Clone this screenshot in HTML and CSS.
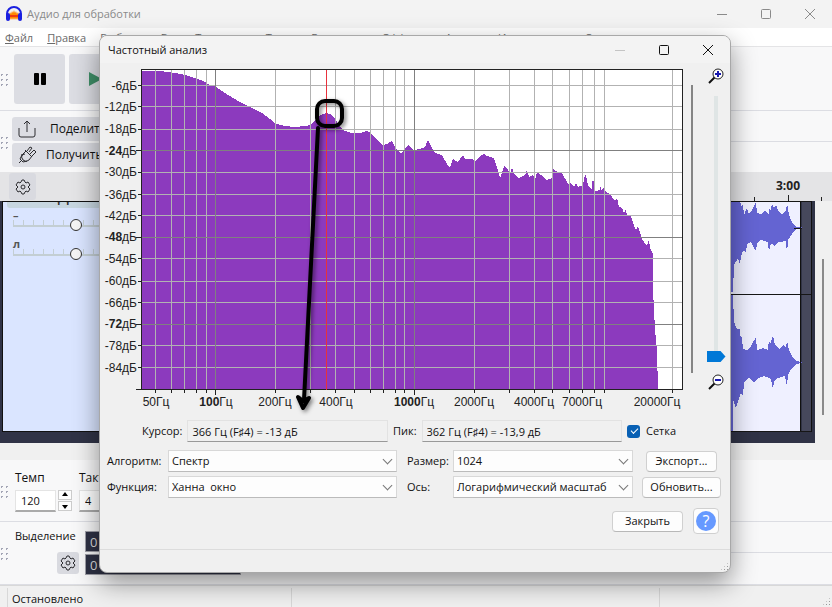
FILE: index.html
```html
<!DOCTYPE html>
<html lang="ru">
<head>
    <meta charset="UTF-8">
    <meta name="viewport" content="width=device-width, initial-scale=1.0">
    <title>Аудио для обработки</title>
    <link rel="stylesheet" href="styles.css">
</head>
<body>

<div class="app">
    <header class="titlebar">
        <svg class="logo" viewBox="0 0 18 16" width="18" height="16">
            <path d="M2 10V8a7 7 0 0 1 14 0v2" fill="none" stroke="#1a1fe0" stroke-width="2"/>
            <path d="M4 10l1-4 1 2 1-3 1 2 1-3 1 3 1-2 1 3 1-2 1 4-1 4-1-2-1 2-1-2-1 2-1-2-1 2-1-2-1 2z" fill="#ff8a00"/>
            <path d="M4 9h10v2H4z" fill="#f03a10"/>
            <rect x="1" y="7" width="4" height="8" rx="2" fill="#1a1fe0"/>
            <rect x="13" y="7" width="4" height="8" rx="2" fill="#1a1fe0"/>
        </svg>
        <span class="app-title">Аудио для обработки</span>
        <div class="window-buttons">
            <button aria-label="Свернуть"><svg viewBox="0 0 12 12"><path d="M1 6.500h10"/></svg></button>
            <button aria-label="Развернуть"><svg viewBox="0 0 12 12"><rect x="1.500" y="1.500" width="9" height="9" rx="1"/></svg></button>
            <button aria-label="Закрыть"><svg viewBox="0 0 12 12"><path d="M1 1l10 10M11 1L1 11"/></svg></button>
        </div>
    </header>

    <nav class="menu">
        <button><u>Ф</u>айл</button>
        <button><u>П</u>равка</button>
        <button>Выбрать</button>
        <button>Вид</button>
        <button>Транспорт</button>
        <button>Треки</button>
        <button>Генерация</button>
        <button>Эффекты</button>
        <button>Анализ</button>
        <button>Инструменты</button>
        <button>Справка</button>
    </nav>

    <div class="toolbar transport">
        <span class="grip"></span>
        <button class="big" aria-label="Пауза"><svg viewBox="0 0 14 14" width="14" height="14"><rect x="1" y="1" width="5" height="12" rx="1"/><rect x="8" y="1" width="5" height="12" rx="1"/></svg></button>
        <button class="big" aria-label="Воспроизвести"><svg viewBox="0 0 14 14" width="14" height="14"><path d="M1 0l13 7-13 7z" fill="#3f8f68"/></svg></button>
        <span class="meter"></span>
    </div>

    <div class="toolbar share">
        <span class="grip"></span>
        <div class="share-buttons">
            <button>
                <svg viewBox="0 0 20 20" width="20" height="20"><path d="M2 9v7q0 2 2 2h12q2 0 2-2V9M10 13V2M7 5l3-3 3 3"/></svg>
                <span>Поделиться аудио</span>
            </button>
            <button>
                <svg viewBox="0 0 20 20" width="20" height="20"><path d="M2 18l3-3M8 5l7 7M9 6L6 9q-3 3 0 6 3 3 6 0l3-4M8 9l-4 1M10 6l3-4 2 1-3 4M13 9l4-4 2 2-4 4M5 10l-2 4 3 3 4-1"/></svg>
                <span>Получить эффекты</span>
            </button>
        </div>
        <div class="dock"></div>
    </div>

    <div class="ruler">
        <button class="gear" aria-label="Настройки шкалы">
            <svg viewBox="0 0 16 16" width="16" height="16"><path d="M6 3l1-2h2l1 2 1 1 2-1 2 3-2 2 2 2-2 3-2-1-1 1-1 2H7l-1-2-1-1-2 1-2-3 2-2-2-2 2-3 2 1z"/><circle cx="8" cy="8" r="2"/></svg>
        </button>
        <svg class="ruler-scale" viewBox="731 172 101 29" width="101" height="29">
            <text x="788" y="190" text-anchor="middle">3:00</text>
            <path d="M754.500 197v4M788.500 195v6M821.500 197v4" stroke="#222"/>
        </svg>
    </div>

    <main class="tracks">
        <div class="track-panel">
            <button class="effects">Эффекты</button>
            <label for="gain">–</label>
            <input type="range" id="gain" min="0" max="100" value="50">
            <label for="pan">л</label>
            <input type="range" id="pan" min="0" max="100" value="50">
        </div>
        <svg class="wave" viewBox="731 201 84 242" width="84" height="242" shape-rendering="crispEdges">
            <rect x="731" y="201" width="70" height="230" fill="#eff0ff"/>
            <path fill="#6464d2" d="M731 201H740L742 207 743 204 744 215 747 208 749 214 752 210 756 202 757 213 761 214 765 211 769 214 769 205 770 212 772 204 774 208 776 205 779 212 782 214 786 211 787 203 789 215 792 222 796 227H802V229H796L792 234 788 240 787 255 786 241 779 242 774 246 772 243 770 245 769 253 768 242 764 241 761 240 757 243 756 251 754 248 751 242 747 244 746 252 743 251 741 256 740 264 738 258 734 265 733 292H731z"/>
            <path fill="#6464d2" d="M731 295H733L734 322 737 329 740 329 740 336 742 338 743 349 747 350 751 346 756 337 757 350 763 348 768 350 769 339 770 345 773 335 775 345 779 349 783 345 786 348 787 340 789 350 792 356 796 361 802 362V363L796 364 791 369 788 375 787 386 785 376 778 378 774 381 773 389 771 380 769 378 764 376 757 379 754 383 749 377 744 383 743 396 741 393 738 402 736 408 733 399V431H731z"/>
            <path d="M731 294.500H811M794 228.500H802M731 431.500H812" stroke="#161616" fill="none"/>
            <path d="M731 201.500H812" stroke="#161616"/>
            <rect x="802" y="202" width="9" height="92" fill="#46485c"/>
            <rect x="802" y="295" width="9" height="136" fill="#46485c"/>
            <path d="M800.500 201V431M811.500 201V432" stroke="#111"/>
        </svg>
        <div class="vscroll"><span></span></div>
    </main>

    <div class="tempo toolbar">
        <span class="grip"></span>
        <div class="field">
            <label for="tempo">Темп</label>
            <div class="spin">
                <input type="text" id="tempo" value="120">
                <div class="steps">
                    <button aria-label="Больше"><svg viewBox="0 0 8 5" width="8" height="5"><path d="M4 0l3 4H1z"/></svg></button>
                    <button aria-label="Меньше"><svg viewBox="0 0 8 5" width="8" height="5"><path d="M4 5l3-4H1z"/></svg></button>
                </div>
            </div>
        </div>
        <div class="field">
            <label for="meter">Такт</label>
            <input type="text" id="meter" value="4">
        </div>
    </div>

    <div class="selection toolbar">
        <span class="grip"></span>
        <div class="selection-label">
            <span>Выделение</span>
            <button class="gear" aria-label="Настройки выделения">
                <svg viewBox="0 0 16 16" width="16" height="16"><path d="M6 3l1-2h2l1 2 1 1 2-1 2 3-2 2 2 2-2 3-2-1-1 1-1 2H7l-1-2-1-1-2 1-2-3 2-2-2-2 2-3 2 1z"/><circle cx="8" cy="8" r="2"/></svg>
            </button>
        </div>
        <div class="times">
            <input type="text" value="0" aria-label="Начало выделения">
            <input type="text" value="0" aria-label="Конец выделения">
        </div>
        <div class="dock"></div>
    </div>

    <footer class="status">
        <span>Остановлено</span>
        <span></span>
        <span></span>
        <i class="size-grip"></i>
    </footer>
</div>

<section class="dialog" role="dialog" aria-labelledby="dialog-title">
    <header class="dialog-title">
        <h1 id="dialog-title">Частотный анализ</h1>
        <div class="window-buttons">
            <button class="off" aria-label="Свернуть"><svg viewBox="0 0 12 12"><path d="M1 6.500h10"/></svg></button>
            <button aria-label="Развернуть"><svg viewBox="0 0 12 12"><rect x="1.500" y="1.500" width="9" height="9" rx="1"/></svg></button>
            <button aria-label="Закрыть"><svg viewBox="0 0 12 12"><path d="M1 1l10 10M11 1L1 11"/></svg></button>
        </div>
    </header>

    <div class="analysis">
        <svg class="plot" viewBox="100 66 586 350" width="586" height="350">
            <rect x="141" y="69" width="542" height="321" fill="#fff"/>
            <!-- spectrum -->
            <path shape-rendering="crispEdges" fill="#8c3abe" d="M142 390V71H160L167 72 175 73 185 75 195 78 203 81 210 85 216 87 228 95 240 102 250 107 262 113 270 119 275 123 280 125 285 126 295 127 305 126 310 125 315 120 320 115 326 113 330 114 335 119 340 127 345 131 352 133 360 133 367 131 371 133 376 139 382 145 387 144 392 141 396 149 401 154 405 148 409 145 413 150 420 149 425 147 428 140 432 148 435 153 442 155 447 164 450 168 453 159 458 162 463 155 465 159 473 159 475 162 479 157 484 154 487 156 494 158 498 170 500 178 503 170 504 166 508 170 510 174 512 167 514 174 519 178 525 175 527 170 529 177 533 175 535 180 537 172 541 175 546 180 552 178 553 168 555 171 562 173 568 184 570 182 574 187 576 183 578 187 583 185 585 175 586 175 588 186 592 189 592 181 594 181 595 191 600 190 600 186 602 191 603 187 605 191 610 194 615 201 617 198 619 207 622 208 624 213 626 209 627 216 631 216 633 223 636 230 638 226 642 239 647 246 649 240 650 248 653 254V290L655 330 657 350 658 390z"/>
            <g fill="none" shape-rendering="crispEdges">
                <path stroke="#b2b2b2" d="M142 85.500H682M142 106.500H682M142 129.500H682M142 172.500H682M142 194.500H682M142 215.500H682M142 258.500H682M142 281.500H682M142 302.500H682M142 345.500H682M142 367.500H682"/>
                <path stroke="#b2b2b2" d="M155.500 70V390M171.500 70V390M184.500 70V390M196.500 70V390M206.500 70V390M275.500 70V390M310.500 70V390M335.500 70V390M354.500 70V390M370.500 70V390M383.500 70V390M395.500 70V390M404.500 70V390M474.500 70V390M509.500 70V390M534.500 70V390M552.500 70V390M569.500 70V390M582.500 70V390M594.500 70V390M604.500 70V390M672.500 70V390"/>
                <path stroke="#808080" d="M142 150.500H682M142 237.500H682M142 324.500H682M215.500 70V390M414.500 70V390"/>
                <path stroke="#222" d="M141.500 69.500H682.500V389.500H141.500z"/>
                <path stroke="#222" d="M138 85.500h4M138 106.500h4M138 129.500h4M136 150.500h6M138 172.500h4M138 194.500h4M138 215.500h4M136 237.500h6M138 258.500h4M138 281.500h4M138 302.500h4M136 324.500h6M138 345.500h4M138 367.500h4M136 389.500h6"/>
                <path stroke="#222" d="M155.500 390v3M171.500 390v3M184.500 390v3M196.500 390v3M206.500 390v3M215.500 390v5M275.500 390v3M310.500 390v3M335.500 390v3M354.500 390v3M370.500 390v3M383.500 390v3M395.500 390v3M404.500 390v3M414.500 390v5M474.500 390v3M509.500 390v3M534.500 390v3M552.500 390v3M569.500 390v3M582.500 390v3M594.500 390v3M604.500 390v3M672.500 390v3"/>
                <path stroke="#e8323c" d="M326.500 70V390"/>
            </g>
            <g class="db">
                <text x="137" y="90">-6дБ</text>
                <text x="137" y="111">-12дБ</text>
                <text x="137" y="133">-18дБ</text>
                <text x="137" y="155">-<tspan class="major">24</tspan>дБ</text>
                <text x="137" y="176">-30дБ</text>
                <text x="137" y="199">-36дБ</text>
                <text x="137" y="220">-42дБ</text>
                <text x="137" y="241">-<tspan class="major">48</tspan>дБ</text>
                <text x="137" y="263">-54дБ</text>
                <text x="137" y="285">-60дБ</text>
                <text x="137" y="307">-66дБ</text>
                <text x="137" y="328">-<tspan class="major">72</tspan>дБ</text>
                <text x="137" y="350">-78дБ</text>
                <text x="137" y="372">-84дБ</text>
            </g>
            <g class="hz">
                <text x="156" y="406">50Гц</text>
                <text x="216" y="406"><tspan class="major">100</tspan>Гц</text>
                <text x="275" y="406">200Гц</text>
                <text x="336" y="406">400Гц</text>
                <text x="414" y="406"><tspan class="major">1000</tspan>Гц</text>
                <text x="474" y="406">2000Гц</text>
                <text x="534" y="406">4000Гц</text>
                <text x="582" y="406">7000Гц</text>
                <text x="657" y="406">20000Гц</text>
            </g>
            <!-- peak marker -->
            <g class="marker">
                <rect x="317" y="101" width="25" height="25" rx="8"/>
                <path d="M318 128L304 400"/>
                <path d="M298 397L303 408 309 398 303 401z"/>
            </g>
        </svg>
        <div class="pan-bar"><span></span></div>
        <div class="zoom">
            <svg viewBox="0 0 16 16" width="16" height="16"><path d="M1 15l6-6" stroke="#111" stroke-width="2"/><circle cx="10" cy="6" r="5" fill="#fff" stroke="#222"/><path d="M7 6h6M10 3v6" stroke="#1a1ab0" stroke-width="2"/></svg>
            <input type="range" min="0" max="100" value="0" aria-label="Масштаб">
            <svg viewBox="0 0 16 16" width="16" height="16"><path d="M1 15l6-6" stroke="#111" stroke-width="2"/><circle cx="10" cy="6" r="5" fill="#fff" stroke="#222"/><path d="M7 6h6" stroke="#1a1ab0" stroke-width="2"/></svg>
        </div>
    </div>

    <div class="readout">
        <label for="cursor">Курсор:</label>
        <input type="text" id="cursor" value="366 Гц (F♯4) = -13 дБ" readonly>
        <label for="peak">Пик:</label>
        <input type="text" id="peak" value="362 Гц (F♯4) = -13,9 дБ" readonly>
        <label class="check"><input type="checkbox" checked>Сетка</label>
    </div>

    <div class="options">
        <label for="algorithm">Алгоритм:</label>
        <div class="select"><select id="algorithm"><option>Спектр</option></select></div>
        <label for="size">Размер:</label>
        <div class="select"><select id="size"><option>1024</option></select></div>
        <button class="btn">Экспорт...</button>
        <label for="function">Функция:</label>
        <div class="select"><select id="function"><option>Ханна&nbsp; окно</option></select></div>
        <label for="axis">Ось:</label>
        <div class="select"><select id="axis"><option>Логарифмический масштаб</option></select></div>
        <button class="btn wide">Обновить...</button>
    </div>

    <div class="actions">
        <button class="btn">Закрыть</button>
        <button class="help" aria-label="Справка"><span>?</span></button>
    </div>

    <footer class="dialog-status"><i class="size-grip"></i></footer>
</section>

</body>
</html>
```

FILE: styles.css
```css
* {
    box-sizing: border-box;
}
body {
    margin: 0;
    font-family: "Open Sans", "Noto Sans", sans-serif;
    font-size: 11px;
    line-height: 16px;
    color: #111;
    overflow: hidden;
}
button, input, select {
    font: inherit;
    color: inherit;
    margin: 0;
    padding: 0;
    border: none;
    background: none;
}
svg {
    display: block;
    flex: none;
}

/* main window */
.app {
    display: flex;
    flex-direction: column;
    height: 100vh;
    background: #f0f0f0;
}
.titlebar {
    display: flex;
    align-items: center;
    height: 28px;
    padding-left: 5px;
    background: #f3f3f3;
    color: #8a8a8a;
}
.app-title {
    margin-left: 4px;
    flex: 1;
}
.window-buttons {
    display: flex;
}
.window-buttons button {
    width: 44px;
    height: 28px;
    display: flex;
    align-items: center;
    justify-content: center;
}
.window-buttons svg {
    width: 12px;
    height: 12px;
    fill: none;
    stroke: currentColor;
}
.menu {
    display: flex;
    gap: 14px;
    height: 19px;
    padding: 2px 0 0 5px;
    background: #fff;
    border-bottom: 1px solid #e4e4e6;
    color: #6a6a6a;
    overflow: hidden;
}
.toolbar {
    display: flex;
    align-items: center;
    background: #f8f8f9;
    border-bottom: 1px solid #dcdde3;
}
.grip {
    width: 10px;
    height: 14px;
    flex: none;
    background: radial-gradient(circle, #a3a5b5 1px, transparent 1px) -1px 0 / 5px 5px;
}
.transport {
    height: 64px;
}
.big {
    width: 51px;
    height: 50px;
    margin-left: 4px;
    border-radius: 3px;
    background: #dcdde3;
    display: flex;
    align-items: center;
    justify-content: center;
}
.meter {
    width: 608px;
    height: 50px;
    margin-left: 3px;
    border-radius: 3px;
    background: #dcdde3;
}
.share {
    height: 61px;
    border-bottom: none;
}
.share-buttons {
    display: grid;
    gap: 2px;
    width: 170px;
    margin-left: 2px;
}
.share-buttons button {
    display: flex;
    align-items: center;
    gap: 9px;
    height: 24px;
    padding-left: 5px;
    border-radius: 3px;
    background: #dcdde3;
    font-size: 12px;
    white-space: nowrap;
    overflow: hidden;
}
.share-buttons button:first-child {
    gap: 13px;
}
.share-buttons svg, .gear svg {
    fill: none;
    stroke: #2c2c30;
    stroke-width: 1;
}
.dock {
    flex: 1;
    align-self: stretch;
    background: linear-gradient(#dcdde3, #dcdde3) 0 30px / 100% 1px no-repeat;
}
.ruler {
    display: flex;
    align-items: center;
    justify-content: space-between;
    height: 29px;
    padding-left: 9px;
    background: #e4e4e6;
}
.ruler-scale text {
    font-size: 12px;
    font-weight: bold;
    fill: #222;
}
.gear {
    width: 27px;
    height: 27px;
    border-radius: 3px;
    background: #d9dae0;
    display: flex;
    align-items: center;
    justify-content: center;
}
.tracks {
    flex: 1;
    display: flex;
    align-items: flex-start;
    margin-bottom: 17px;
    background: #303346;
    overflow: hidden;
}
.track-panel {
    display: flex;
    flex-direction: column;
    width: 144px;
    height: 231px;
    margin-left: 2px;
    border: 1px solid #111;
    background: #dae5ff;
    overflow: hidden;
}
.track-panel label {
    height: 14px;
    padding-left: 10px;
    font-weight: bold;
    line-height: 14px;
    color: #555;
}
.effects {
    height: 20px;
    flex: none;
    margin: -14px 4px 0;
    border-radius: 3px;
    background: #c7d6e0;
    font-weight: bold;
    color: #333;
}
.track-panel input {
    appearance: none;
    flex: none;
    width: 126px;
    height: 15px;
    margin: -5px 0 5px 10px;
    background:
        linear-gradient(#c3ced3, #c3ced3) 0 8px / 100% 2px no-repeat,
        repeating-linear-gradient(90deg, #c3ced3 0 1px, transparent 1px 10px) 0 3px / 100% 5px no-repeat;
}
.track-panel input::-webkit-slider-thumb {
    appearance: none;
    width: 12px;
    height: 12px;
    border: 1px solid #333;
    border-radius: 50%;
    background: #f5f5f5;
}
.wave {
    margin-left: auto;
}
.vscroll {
    width: 17px;
    align-self: stretch;
    padding: 58px 7px 0;
    background: #f0f0f0;
}
.vscroll span {
    display: block;
    width: 2px;
    height: 156px;
    background: #8a8a8a;
}
.tempo {
    height: 62px;
    gap: 7px;
    font-size: 12px;
}
.tempo .grip {
    margin-right: -2px;
}
.field {
    display: grid;
    gap: 4px;
}
.field input {
    width: 41px;
    height: 22px;
    padding-left: 5px;
    background: #fff;
    border: 1px solid #e4e4e4;
    border-bottom: 2px solid #aaa;
    font-size: 11px;
}
.spin {
    display: flex;
    gap: 2px;
}
.steps {
    display: grid;
    gap: 1px;
}
.steps button {
    width: 14px;
    height: 10px;
    border: 1px solid #ccc;
    background: #fdfdfd;
    display: flex;
    align-items: center;
    justify-content: center;
}
.selection {
    height: 63px;
}
.selection .grip {
    margin-right: 5px;
}
.selection-label {
    width: 70px;
    display: flex;
    flex-direction: column;
    gap: 8px;
    padding: 0 6px 4px 0;
    white-space: nowrap;
}
.selection-label .gear {
    width: 22px;
    height: 22px;
    align-self: flex-end;
}
.times {
    display: grid;
    gap: 2px;
}
.times input {
    width: 156px;
    height: 21px;
    padding-left: 4px;
    border: 1px solid #a0a0a8;
    background: #2e3144;
    color: #ddd;
    font-size: 13px;
}
.status {
    position: relative;
    display: grid;
    grid-template-columns: 284px 368px 1fr;
    height: 22px;
    padding: 2px 0 0 7px;
    border-top: 1px solid #d8d8d8;
}
.status span {
    padding: 3px 0 0 4px;
    border-left: 1px solid #d8d8d8;
}
.size-grip {
    position: absolute;
    right: 1px;
    bottom: 1px;
    width: 9px;
    height: 9px;
    background: radial-gradient(circle, #999 1px, transparent 1px) 0 0 / 3px 3px;
    clip-path: polygon(100% 0, 100% 100%, 0 100%);
}

/* spectrum window */
.dialog {
    position: absolute;
    top: 35px;
    left: 99px;
    width: 632px;
    border: 1px solid #a8a8a8;
    border-radius: 8px;
    background: #f0f0f0;
    box-shadow: 0 10px 26px rgba(0, 0, 0, 0.42);
    overflow: hidden;
}
.dialog-title {
    display: flex;
    align-items: center;
    justify-content: space-between;
    height: 27px;
    padding-left: 8px;
    background: #f3f3f3;
}
.dialog-title h1 {
    margin: 0;
    font-size: 11px;
    font-weight: normal;
}
.off {
    color: #c4c4c4;
}
.analysis {
    display: flex;
    padding-top: 3px;
}
.plot text {
    font-family: "Liberation Sans", Arial, sans-serif;
    font-size: 12px;
    fill: #222;
}
.db {
    text-anchor: end;
}
.hz {
    text-anchor: middle;
}
.major {
    font-weight: bold;
}
.marker {
    fill: none;
    stroke: #000;
    stroke-width: 4;
    stroke-linecap: round;
    stroke-linejoin: round;
    filter: drop-shadow(2px 2px 2px rgba(0, 0, 0, 0.5));
}
.pan-bar {
    padding: 19px 0 0 5px;
    width: 21px;
}
.pan-bar span {
    display: block;
    width: 2px;
    height: 288px;
    background: #858585;
}
.zoom {
    display: flex;
    flex-direction: column;
    align-items: center;
    gap: 12px;
    width: 18px;
    padding-top: 2px;
}
.zoom input {
    appearance: none;
    writing-mode: vertical-lr;
    direction: rtl;
    width: 19px;
    height: 266px;
    background: linear-gradient(#dfe5e5, #dfe5e5) center / 4px 100% no-repeat;
}
.zoom input::-webkit-slider-thumb {
    appearance: none;
    width: 19px;
    height: 11px;
    background: #0078d7;
    clip-path: polygon(0 0, 74% 0, 100% 50%, 74% 100%, 0 100%);
}
.readout {
    display: flex;
    align-items: center;
    gap: 5px;
    padding: 4px 7px 0 42px;
}
.readout input[type="text"] {
    flex: 1;
    min-width: 0;
    height: 22px;
    padding-left: 4px;
    border: 1px solid #e2e2e2;
    border-bottom: 1px solid #999;
}
.check {
    display: flex;
    align-items: center;
    gap: 6px;
    width: 96px;
}
.check input {
    appearance: none;
    position: relative;
    width: 13px;
    height: 13px;
    border-radius: 3px;
    background: #0860b4;
}
.check input::after {
    content: "";
    position: absolute;
    left: 4px;
    top: 3px;
    width: 6px;
    height: 3px;
    border: solid #fff;
    border-width: 0 0 1px 1px;
    transform: rotate(-45deg);
}
.options {
    display: grid;
    grid-template-columns: 61px 229px 56px 180px 1fr;
    row-gap: 4px;
    align-items: center;
    padding: 8px 0 0 7px;
}
.options label:nth-of-type(2n) {
    padding-left: 10px;
}
.select {
    position: relative;
}
.select::after {
    content: "";
    position: absolute;
    right: 6px;
    top: 6px;
    width: 6px;
    height: 6px;
    border: solid #777;
    border-width: 0 1px 1px 0;
    transform: rotate(45deg);
    pointer-events: none;
}
.select select {
    appearance: none;
    display: block;
    width: 100%;
    height: 22px;
    padding-left: 3px;
    border: 1px solid #d8d8d8;
    border-bottom-color: #bbb;
    background: #fdfdfd;
}
.btn {
    justify-self: center;
    width: 71px;
    height: 21px;
    border: 1px solid #d0d0d0;
    border-bottom-color: #b8b8b8;
    border-radius: 4px;
    background: #fdfdfd;
    line-height: 18px;
}
.wide {
    width: 79px;
}
.actions {
    display: flex;
    align-items: center;
    justify-content: flex-end;
    gap: 10px;
    padding: 10px 11px 0 0;
}
.help {
    width: 26px;
    height: 26px;
    padding: 2px;
    border: 1px solid #d0d0d0;
    border-radius: 4px;
    background: #fdfdfd;
}
.help span {
    display: block;
    width: 20px;
    height: 20px;
    border-radius: 50%;
    background: #6699ff;
    color: #fff;
    font-size: 16px;
    line-height: 20px;
}
.dialog-status {
    position: relative;
    height: 23px;
    margin-top: 15px;
    border-top: 1px solid #dcdcdc;
}
```
